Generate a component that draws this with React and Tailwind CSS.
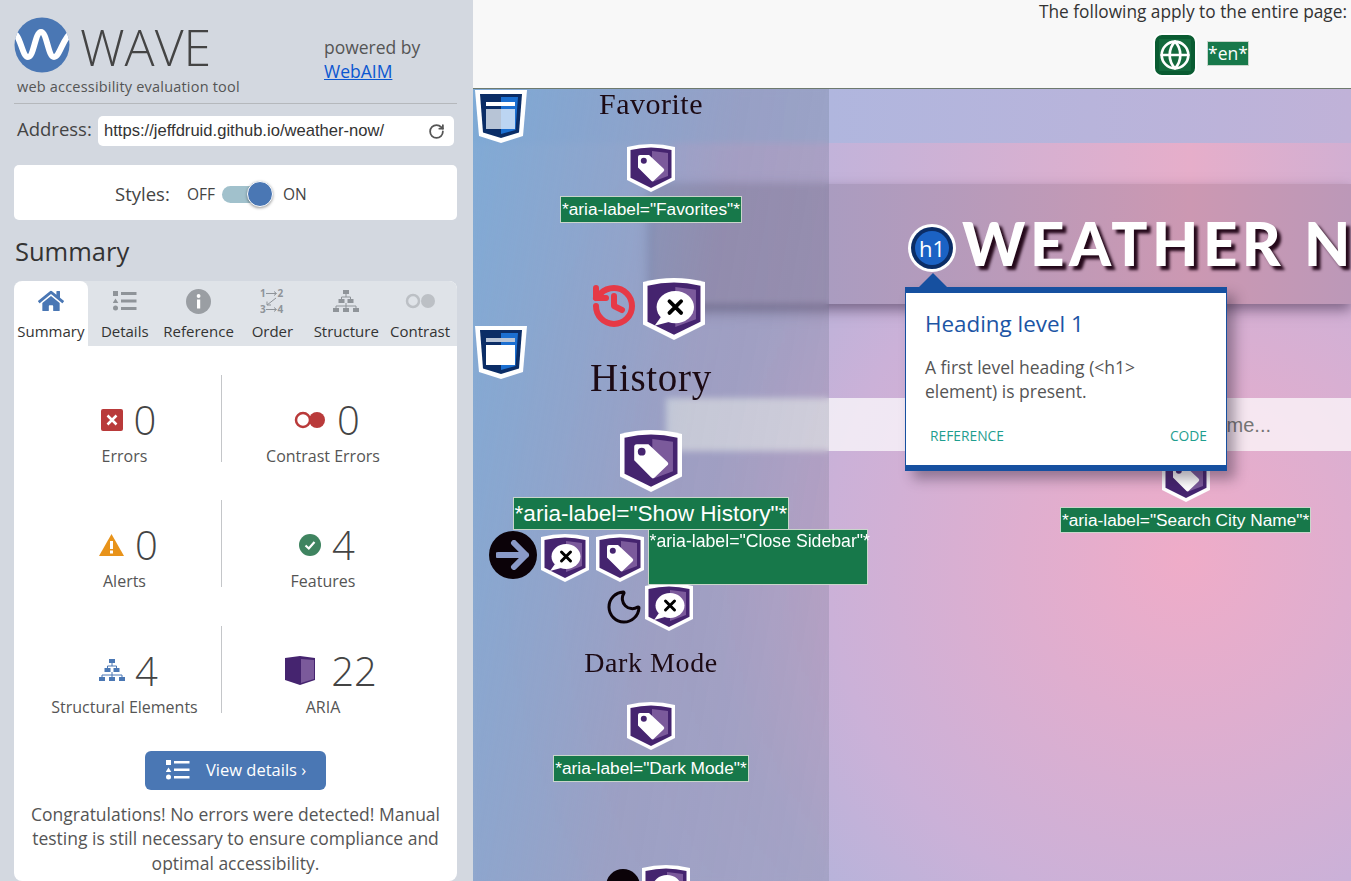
import { FaHome } from "react-icons/fa";
import { Globe, History, Moon, RotateCw } from "lucide-react";

const OPEN = "font-['Open_Sans',sans-serif]";
const ARIAL = "font-['Liberation_Sans',Arial,sans-serif]";
const SERIF = "font-['Liberation_Serif',serif]";

const SHIELD_OUTER = "M24 0Q36 0 48 3V36L24 48L0 36V3Q12 0 24 0Z";
const SHIELD_INNER = "M24 3.500Q34 3.500 44.500 6V33.800L24 44L3.500 33.800V6Q14 3.500 24 3.500Z";

function TagBadge({ size = 48 }) {
  return (
    <svg width={size} height={size} viewBox="0 0 48 48" className="block shrink-0">
      <path d={SHIELD_OUTER} fill="#fff" />
      <path d={SHIELD_INNER} fill="#45246f" />
      <path d="M25 7L41 9V32L25 38Z" fill="#7b5a9b" />
      <path d="M11 13a2 2 0 0 1 2-2H22L36.500 24.500a2 2 0 0 1 0 3L27 36.500a2 2 0 0 1-3 0L11 23.500Z" fill="#fff" />
      <circle cx="16.800" cy="16.800" r="3" fill="#45246f" />
    </svg>
  );
}

function CommentBadge({ size = 48 }) {
  return (
    <svg width={size} height={size} viewBox="0 0 48 48" className="block shrink-0">
      <path d={SHIELD_OUTER} fill="#fff" />
      <path d={SHIELD_INNER} fill="#45246f" />
      <path d="M25 7L41 9V32L25 38Z" fill="#7b5a9b" />
      <ellipse cx="25" cy="22.500" rx="14.500" ry="12.500" fill="#fff" />
      <path d="M14 30L9 37L20 34Z" fill="#fff" />
      <path d="M20.500 18L29.500 27M29.500 18L20.500 27" stroke="#000" strokeWidth="3" strokeLinecap="round" />
    </svg>
  );
}

function StructureShield({ className, variant }) {
  return (
    <svg width="54" height="54" viewBox="0 0 54 54" className={className}>
      <path d="M1 1H53L49 47L27 54L5 47Z" fill="#fff" />
      <path d="M6 5H48L45 43.500L27 49L9 43.500Z" fill="#0b2d66" />
      <path d="M27 8H44L41.500 41L27 45Z" fill="#1b6fd1" />
      <rect x="12" y="13" width="29" height="4" fill={variant === "top" ? "#fff" : "#b8c4d6"} />
      <rect x="12" y="20" width="15" height="20" fill={variant === "top" ? "#b7c4d6" : "#fff"} />
      <rect x="27" y="20" width="14" height="20" fill={variant === "top" ? "#bcd5f2" : "#fff"} />
    </svg>
  );
}

function AriaLabel({ children, className }) {
  return (
    <div className={`bg-[#17784a] border border-[#c9d6cb] text-white whitespace-nowrap ${className}`}>
      {children}
    </div>
  );
}

function WaveLogo() {
  return (
    <svg width="56" height="56" viewBox="0 0 56 56" className="block shrink-0">
      <defs>
        <clipPath id="wave-clip"><circle cx="28" cy="28" r="27.500" /></clipPath>
      </defs>
      <circle cx="28" cy="28" r="27.500" fill="#4a77b4" />
      <path d="M-1 17C6 15 8 40 14 40C20 40 21 15 27 15C33 15 34 40 40 40C46 40 49 20 58 15" fill="none" stroke="#fff" strokeWidth="6" clipPath="url(#wave-clip)" />
    </svg>
  );
}

function DetailsIcon({ color, bar = 3 }) {
  return (
    <svg width="24" height="20" viewBox="0 0 24 20" className="block">
      <rect x="0" y="0" width="5" height="5" fill={color} />
      <path d="M2.500 7.500L5.300 12H-.3Z" fill={color} />
      <circle cx="2.500" cy="17" r="2.500" fill={color} />
      <rect x="8" y="1" width="15.500" height={bar} fill={color} />
      <rect x="8" y="8.500" width="15.500" height={bar} fill={color} />
      <rect x="8" y="16" width="15.500" height={bar} fill={color} />
    </svg>
  );
}

function TreeIcon({ color, w = 26, h = 23 }) {
  return (
    <svg width={w} height={h} viewBox="0 0 26 23" className="block">
      <rect x="10" y="0" width="6" height="4" fill={color} />
      <rect x="5.500" y="9" width="6" height="4" fill={color} />
      <rect x="14.500" y="9" width="6" height="4" fill={color} />
      <rect x="0" y="18" width="6" height="4" fill={color} />
      <rect x="10" y="18" width="6" height="4" fill={color} />
      <rect x="20" y="18" width="6" height="4" fill={color} />
      <path d="M13 4V7M8.500 9V7H17.500V9M3 18V16H23V18M13 13V18" fill="none" stroke={color} strokeWidth="1" />
    </svg>
  );
}

function OrderIcon() {
  return (
    <svg width="24" height="25" viewBox="0 0 24 25" className="block">
      <text x="0" y="8" fontSize="10" fontWeight="700" fill="#8f9499" fontFamily="Open Sans">1</text>
      <text x="17.500" y="8" fontSize="10" fontWeight="700" fill="#8f9499" fontFamily="Open Sans">2</text>
      <text x="0" y="24" fontSize="10" fontWeight="700" fill="#8f9499" fontFamily="Open Sans">3</text>
      <text x="17.500" y="24" fontSize="10" fontWeight="700" fill="#8f9499" fontFamily="Open Sans">4</text>
      <path d="M6 4.500H16M14 2.500L16.500 4.500L14 6.500M6 20.500H16M14 18.500L16.500 20.500L14 22.500M16 9L7 16M7 12.500V16H11" fill="none" stroke="#8f9499" strokeWidth="1" />
    </svg>
  );
}

function DotsIcon({ color, w = 31, r = 7 }) {
  return (
    <svg width={w} height={r * 2 + 2} viewBox={`0 0 ${w} ${r * 2 + 2}`} className="block">
      <circle cx={r + 1} cy={r + 1} r={r - 1} fill="none" stroke={color} strokeWidth="2.500" />
      <circle cx={w - r - 1} cy={r + 1} r={r} fill={color} />
    </svg>
  );
}

function ErrorIcon() {
  return (
    <svg width="22" height="22" viewBox="0 0 22 22" className="block">
      <rect width="22" height="22" rx="2" fill="#b93a3a" />
      <path d="M6.500 6.500L15.500 15.500M15.500 6.500L6.500 15.500" stroke="#fff" strokeWidth="2.500" />
    </svg>
  );
}

function AlertIcon() {
  return (
    <svg width="25" height="22" viewBox="0 0 25 22" className="block">
      <path d="M12.500 0L25 22H0Z" fill="#e8931a" />
      <rect x="11" y="7" width="3" height="8" fill="#fff" />
      <rect x="11" y="16.500" width="3" height="3" fill="#fff" />
    </svg>
  );
}

function CheckIcon() {
  return (
    <svg width="22" height="22" viewBox="0 0 22 22" className="block">
      <circle cx="11" cy="11" r="11" fill="#3f8460" />
      <path d="M6.500 11.500L9.800 14.500L15.500 8" fill="none" stroke="#fff" strokeWidth="2.200" />
    </svg>
  );
}

function AriaIcon() {
  return (
    <svg width="30" height="30" viewBox="0 0 30 30" className="block">
      <path d="M0 2L15 0L30 2V24L15 29L0 24Z" fill="#45246f" />
      <path d="M16 3L29 4V23L16 27Z" fill="#7b5a9b" />
    </svg>
  );
}

const TABS = [
  { label: "Summary", icon: <FaHome size={26} color="#4a77b4" />, active: true },
  { label: "Details", icon: <DetailsIcon color="#8f9499" /> },
  {
    label: "Reference",
    icon: (
      <svg width="25" height="25" viewBox="0 0 25 25" className="block">
        <circle cx="12.500" cy="12.500" r="12.500" fill="#9a9ea3" />
        <rect x="11" y="10.500" width="3.200" height="9" fill="#fff" />
        <circle cx="12.600" cy="7" r="1.900" fill="#fff" />
      </svg>
    ),
  },
  { label: "Order", icon: <OrderIcon /> },
  { label: "Structure", icon: <TreeIcon color="#8f9499" /> },
  { label: "Contrast", icon: <DotsIcon color="#bcc0c5" /> },
];

const STATS = [
  { icon: <ErrorIcon />, num: "0", label: "Errors", gap: "gap-[11px]", pl: "pl-[8px]" },
  { icon: <DotsIcon color="#b93a3a" w={32} r={8} />, num: "0", label: "Contrast Errors", gap: "gap-[11px]", pl: "pl-[8px]" },
  { icon: <AlertIcon />, num: "0", label: "Alerts", gap: "gap-[11px]", pl: "pl-[8px]" },
  { icon: <CheckIcon />, num: "4", label: "Features", gap: "gap-[11px]", pl: "pl-[8px]" },
  { icon: <TreeIcon color="#4a77b4" />, num: "4", label: "Structural Elements", gap: "gap-[10px]", pl: "pl-[8px]" },
  { icon: <AriaIcon />, num: "22", label: "ARIA", gap: "gap-[16px]", pl: "pl-[16px]" },
];

function Sidebar() {
  return (
    <div className={`${OPEN} w-[473px] h-[881px] shrink-0 bg-[#d3d8e0] pl-[14px] pr-[16px] text-[#444] overflow-hidden`}>
      <div className="flex h-[104px] border-b border-[#b5b8bc]">
        <div className="w-[310px] pt-[17px]">
          <div className="flex items-center gap-[10px] h-[56px]">
            <WaveLogo />
            <span className="text-[50px] font-light leading-[50px] mt-[3px] text-[#444]">WAVE</span>
          </div>
          <div className="text-[14.500px] leading-[18px] mt-[5px] ml-[3px] tracking-[0.2px] text-[#555] whitespace-nowrap">web accessibility evaluation tool</div>
        </div>
        <div className="pt-[35px] text-[17.500px] leading-[24px] text-[#555]">
          <div>powered by</div>
          <div className="text-[#0b57d0] underline">WebAIM</div>
        </div>
      </div>

      <div className="flex items-center h-[30px] mt-[12px] pl-[3px]">
        <span className="text-[18.500px] w-[81px] text-[#444] mt-[-4px]">Address:</span>
        <div className="w-[356px] h-[30px] bg-white rounded-[5px] flex items-center justify-between pl-[6px] pr-[9px]">
          <span className={`${ARIAL} text-[16.600px] text-[#333]`}>https://jeffdruid.github.io/weather-now/</span>
          <RotateCw size={17} color="#555" strokeWidth={2.500} />
        </div>
      </div>

      <div className="flex items-center h-[55px] mt-[19px] pt-[4px] bg-white rounded-[5px] pl-[101px]">
        <span className="text-[18.500px] w-[72px] text-[#444] mt-[-2px]">Styles:</span>
        <span className="text-[15.500px] w-[35px] text-[#444]">OFF</span>
        <div className="relative w-[43px] h-[17px] rounded-full bg-[#a1c1cc]">
          <div className="absolute right-[-8px] top-[-5px] w-[26px] h-[26px] rounded-full bg-[#4a77b4] border border-white shadow-[0_1px_3px_rgba(0,0,0,0.4)]" />
        </div>
        <span className="text-[15.500px] ml-[18px] text-[#444]">ON</span>
      </div>

      <div className="text-[25.500px] leading-[32px] mt-[15px] ml-[1px] text-[#333]">Summary</div>

      <div className="mt-[14px] bg-white rounded-[8px] h-[600px] overflow-hidden">
        <div className="grid grid-cols-6 h-[65px] bg-[#dfe3e8]">
          {TABS.map((t) => (
            <div key={t.label} className={`flex flex-col items-center ${t.active ? "bg-white rounded-t-[8px]" : ""}`}>
              <div className="h-[40px] flex items-center justify-center">{t.icon}</div>
              <div className="text-[15px] leading-[20px] text-[#333] whitespace-nowrap">{t.label}</div>
            </div>
          ))}
        </div>

        <div className="grid grid-cols-[194px_202px] gap-y-[38.400px] ml-[14px] mt-[29px]">
          {STATS.map((s, i) => (
            <div key={s.label} className={`h-[87px] flex flex-col items-center pt-[24px] ${i % 2 === 0 ? "border-r border-[#c4c6c9]" : ""}`}>
              <div className={`flex items-center ${s.gap} ${s.pl} h-[42px]`}>
                {s.icon}
                <span className="text-[40px] font-[350] leading-[42px] text-[#444]">{s.num}</span>
              </div>
              <div className="text-[16px] leading-[24px] mt-[3px] text-[#555] whitespace-nowrap">{s.label}</div>
            </div>
          ))}
        </div>

        <div className="flex justify-center mt-[38px]">
          <div className="flex items-center w-[181px] h-[39px] bg-[#4a77b4] rounded-[6px] pl-[21px] text-white">
            <DetailsIcon color="#fff" bar={2.500} />
            <span className="text-[16.500px] ml-[16px] whitespace-nowrap">View details ›</span>
          </div>
        </div>

        <p className="text-[17.500px] leading-[24.500px] text-center text-[#555] mt-[12px] px-[14px]">
          Congratulations! No errors were detected! Manual testing is still necessary to ensure compliance and optimal accessibility.
        </p>
      </div>
    </div>
  );
}

function PageSidebar() {
  return (
    <div className={`${SERIF} absolute left-0 top-0 h-full w-[356px] z-10 flex flex-col items-center text-[#1c0a14] bg-[linear-gradient(100deg,rgba(108,165,210,0.72)_0%,rgba(70,85,110,0.22)_55%,rgba(60,75,85,0.15)_100%)] backdrop-blur-[3px]`}>
      <StructureShield className="absolute left-[1px] top-[0px]" variant="top" />
      <StructureShield className="absolute left-[1px] top-[236px]" variant="bottom" />

      <div className="text-[30px] leading-[32px] tracking-[0.5px] mt-[-1px]">Favorite</div>
      <div className="mt-[24px]"><TagBadge /></div>
      <AriaLabel className={`${ARIAL} text-[17.300px] leading-[25px] mt-[4px] px-[1px]`}>*aria-label="Favorites"*</AriaLabel>

      <div className="flex items-start mt-[55px] ml-[-8px]">
        <History size={48} color="#e63946" strokeWidth={3} className="mt-[4px]" />
        <div className="ml-[5px]"><CommentBadge size={62} /></div>
      </div>

      <div className="text-[39px] leading-[44px] tracking-[0.7px] mt-[16px]">History</div>
      <div className="mt-[30px]"><TagBadge size={62} /></div>
      <AriaLabel className={`${ARIAL} text-[22.600px] leading-[31px] mt-[5px] px-[1px] relative`}>*aria-label="Show History"*</AriaLabel>

      <div className="flex items-start relative ml-[-1px] h-[56px] w-[380px] pl-[28px]">
        <div className="w-[48px] h-[48px] mt-[1px] rounded-full bg-[#0b0208] flex items-center justify-center">
          <svg width="34" height="30" viewBox="0 0 34 30"><path d="M2 15H30M18 3L30 15L18 27" fill="none" stroke="#8a9ac8" strokeWidth="6" strokeLinecap="round" strokeLinejoin="round" /></svg>
        </div>
        <div className="ml-[4px] mt-[4px]"><CommentBadge /></div>
        <div className="ml-[7px] mt-[4px]"><TagBadge /></div>
        <AriaLabel className={`${ARIAL} absolute left-[187px] top-[-1px] w-[220px] h-[56px] text-[17.700px] leading-[22px] px-[1px]`}>*aria-label="Close Sidebar"*</AriaLabel>
      </div>

      <div className="flex items-start ml-[-5px] mt-[1px]">
        <Moon size={40} color="#0b0208" strokeWidth={1.800} className="mt-[4px]" />
        <div className="ml-[1px]"><CommentBadge /></div>
      </div>

      <div className="text-[28px] leading-[32px] tracking-[0.6px] mt-[16px]">Dark Mode</div>
      <div className="mt-[23px]"><TagBadge /></div>
      <AriaLabel className={`${ARIAL} text-[17.300px] leading-[25px] mt-[5px] px-[1px]`}>*aria-label="Dark Mode"*</AriaLabel>

      <div className="flex items-start mt-[83px] ml-[-6px]">
        <div className="w-[34px] h-[34px] mt-[4px] rounded-full bg-[#0b0208]" />
        <div className="ml-[2px]"><CommentBadge /></div>
      </div>
    </div>
  );
}

function Popover() {
  return (
    <div className={`${OPEN} absolute left-[432px] top-[198px] w-[322px] h-[184px] z-20 bg-white border-x border-x-[#1650a0] border-y-[6px] border-y-[#1650a0] shadow-[8px_8px_12px_rgba(40,30,50,0.4)] pl-[19px]`}>
      <div className="absolute left-[12px] top-[-20px] w-0 h-0 border-x-[15px] border-x-transparent border-b-[15px] border-b-[#1650a0]" />
      <div className="text-[22.400px] leading-[32px] mt-[15px] text-[#1c55a5]">Heading level 1</div>
      <div className="text-[17.500px] leading-[24px] mt-[15px] text-[#555]">
        A first level heading (&lt;h1&gt;<br />element) is present.
      </div>
      <div className="flex justify-between text-[13.800px] leading-[20px] mt-[23px] pl-[5px] pr-[19px] text-[#1f9e8f]">
        <span>REFERENCE</span>
        <span>CODE</span>
      </div>
    </div>
  );
}

function PageCanvas() {
  return (
    <div className="relative flex-1 overflow-hidden bg-[radial-gradient(circle_at_712px_470px,#efacc8_0px,#dfaecf_166px,#cbb1d8_358px,#b8b3da_480px,#b3b7de_700px)] flex flex-col">
      <div className="h-[54px] shrink-0 bg-[linear-gradient(90deg,#aab4de_0px,#b0b6de_356px,#c0b2d8_878px)]" />
      <div className="ml-[200px] h-[41px] shrink-0 bg-[linear-gradient(90deg,#bcb4dc_0px,#c2b3da_156px,#e6aeca_517px,#d2afd2_678px)]" />
      <div className="ml-[180px] h-[120px] shrink-0 bg-[linear-gradient(90deg,#a69dc0_0px,#aa9cc0_176px,#cc98b2_537px,#bc98b8_698px)] shadow-[0_6px_12px_rgba(50,30,60,0.5)] flex items-center">
        <div className="ml-[255px] w-[48px] h-[48px] mt-[8px] rounded-full bg-white flex items-center justify-center shrink-0">
          <div className="w-[42px] h-[42px] rounded-full bg-[#0b2d66] flex items-center justify-center">
            <div className="w-[34px] h-[34px] rounded-full bg-[#1b62c4] flex items-center justify-center">
              <span className="font-['Open_Sans',sans-serif] text-[22px] text-white leading-none">h1</span>
            </div>
          </div>
        </div>
        <span className="ml-[6px] font-['Lato',sans-serif] font-black text-[60px] leading-none text-white tracking-[4.500px] whitespace-nowrap [text-shadow:4px_4px_3px_#24081a] mt-[-2px]">WEATHER NOW</span>
      </div>

      <div className="ml-[193px] mt-[94px] h-[53px] shrink-0 bg-[rgba(255,255,255,0.7)] flex items-center justify-end">
        <span className={`${ARIAL} text-[20px] text-[#757575] mr-[80px]`}>City Name...</span>
      </div>

      <div className="self-start ml-[689px] mt-[3px]"><TagBadge /></div>
      <AriaLabel className={`${ARIAL} self-start ml-[587px] mt-[5px] text-[17.300px] leading-[24px] px-[1px]`}>*aria-label="Search City Name"*</AriaLabel>

      <Popover />
      <PageSidebar />
    </div>
  );
}

export default function App() {
  return (
    <div className="flex w-[1351px] h-[881px] overflow-hidden bg-white">
      <Sidebar />
      <div className="flex-1 flex flex-col min-w-0">
        <div className={`${OPEN} h-[89px] shrink-0 bg-[#f8f8f8] border-b border-[#6e7a6e] flex flex-col items-end pr-[4px]`}>
          <div className="text-[17.300px] leading-[24px] text-[#333] whitespace-nowrap">The following apply to the entire page:</div>
          <div className="flex items-center mt-[9px] mr-[98px]">
            <div className="w-[44px] h-[44px] rounded-[9px] bg-[#0a5c32] border-2 border-white flex items-center justify-center">
              <div className="w-[32px] h-[32px] bg-[#13693d] flex items-center justify-center">
                <Globe size={32} color="#fff" strokeWidth={2} className="shrink-0" />
              </div>
            </div>
            <AriaLabel className="ml-[10px] mt-[-4px] w-[42px] text-center text-[17.500px] leading-[23px]">*en*</AriaLabel>
          </div>
        </div>
        <PageCanvas />
      </div>
    </div>
  );
}
